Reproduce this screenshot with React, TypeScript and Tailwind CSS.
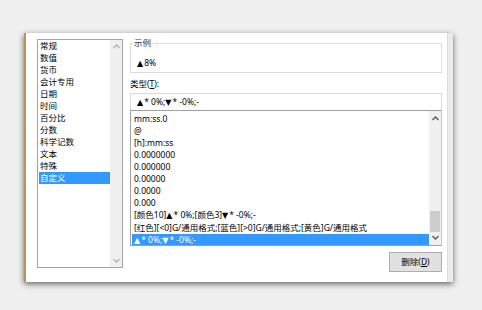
const cats = ['常规', '数值', '货币', '会计专用', '日期', '时间', '百分比', '分数', '科学记数', '文本', '特殊', '自定义'];

const formats = [
  'mm:ss.0',
  '@',
  '[h]:mm:ss',
  '0.0000000',
  '0.000000',
  '0.00000',
  '0.0000',
  '0.000',
  '[颜色10]▲* 0%;[颜色3]▼* -0%;-',
  '[红色][<0]G/通用格式;[蓝色][>0]G/通用格式;[黄色]G/通用格式',
  '▲* 0%;▼* -0%;-',
];

// triangles are drawn smaller than the CJK full-width glyph
function Fmt({ text }: { text: string }) {
  const parts = text.split(/([▲▼])/);
  return (
    <>
      {parts.map((p, i) =>
        p === '▲' || p === '▼' ? (
          <span key={i} className="text-[8px] mr-[1px]" style={{ fontFamily: '"DejaVu Sans", sans-serif' }}>
            {p}
          </span>
        ) : (
          <span key={i}>{p}</span>
        )
      )}
    </>
  );
}

function Chevron({ up, color }: { up?: boolean; color: string }) {
  return (
    <svg width="7" height="5" viewBox="0 0 7 5">
      <path d={up ? 'M0.5 4 L3.5 1 L6.5 4' : 'M0.5 1 L3.5 4 L6.5 1'} fill="none" stroke={color} strokeWidth="1.3" />
    </svg>
  );
}

export default function App() {
  return (
    <div
      className="w-[482px] h-[310px] bg-[#f0f0f0] pt-[33px] pl-[24px] overflow-hidden text-black"
      style={{ fontFamily: '"Noto Sans", "Noto Sans CJK SC", sans-serif' }}
    >
      <div className="w-[429px] h-[249px] bg-white flex border-l-2 border-[#b8935c] shadow-[0px_2px_6px_rgba(0,0,0,0.6)]">
        {/* category list */}
        <div className="ml-[11px] mt-[6px] w-[86px] h-[229px] border border-[#a3a3a3] flex">
          <div className="flex-1 pl-[1px] text-[8.5px] leading-[12px]">
            {cats.map((c, i) => (
              <div
                key={c}
                className={i === cats.length - 1 ? 'bg-[#3399ff] text-white pl-[1px]' : 'pl-[1px]'}
              >
                {c}
              </div>
            ))}
          </div>
          <div className="w-[12px] bg-[#f0f0f0] flex flex-col items-center justify-between py-[4px]">
            <Chevron up color="#b0b0b0" />
            <Chevron color="#b0b0b0" />
          </div>
        </div>

        {/* right side */}
        <div className="ml-[7px] w-[312px] flex flex-col pt-[5px]">
          <div className="relative mt-[5px] h-[30px] border border-[#dcdcdc]">
            <span className="absolute -top-[7px] left-[2px] bg-white px-[1px] text-[8.5px] leading-[12px] text-[#333]">示例</span>
            <div className="pl-[6px] pt-[13px] text-[8.5px] leading-[12px]">
              <Fmt text="▲8%" />
            </div>
          </div>
          <div className="mt-[5px] text-[8.5px] leading-[12px]">
            类型(<span className="underline">T</span>):
          </div>
          <div className="mt-[3px] h-[17px] border border-[#d9d9d9] border-b-0 pl-[6px] text-[8.5px] leading-[16px]">
            <Fmt text="▲* 0%;▼* -0%;-" />
          </div>
          <div className="h-[136px] border border-[#a0a0a0] border-r-[#c8c8c8] flex">
            <div className="flex-1 pt-[2px] pl-[1px] text-[8.5px] leading-[12px] whitespace-nowrap overflow-hidden">
              {formats.map((f, i) => (
                <div
                  key={f}
                  className={i === formats.length - 1 ? 'bg-[#3399ff] text-white pl-[2px]' : 'pl-[2px]'}
                >
                  <Fmt text={f} />
                </div>
              ))}
            </div>
            <div className="w-[12px] bg-[#f0f0f0] flex flex-col items-center pt-[5px] pb-[5px]">
              <Chevron up color="#555" />
              <div className="flex-1" />
              <div className="w-[10px] h-[21px] bg-[#cdcdcd] mb-[3px]" />
              <Chevron color="#555" />
            </div>
          </div>
          <div className="flex justify-end mt-[6px]">
            <button className="w-[53px] h-[20px] bg-[#e1e1e1] border border-[#adadad] text-[8.5px] leading-[18px]">
              删除(<span className="underline">D</span>)
            </button>
          </div>
        </div>

        <div className="ml-[5px] w-[6px] bg-[#ebebeb] border-l border-[#dcdcdc]" />
      </div>
    </div>
  );
}
